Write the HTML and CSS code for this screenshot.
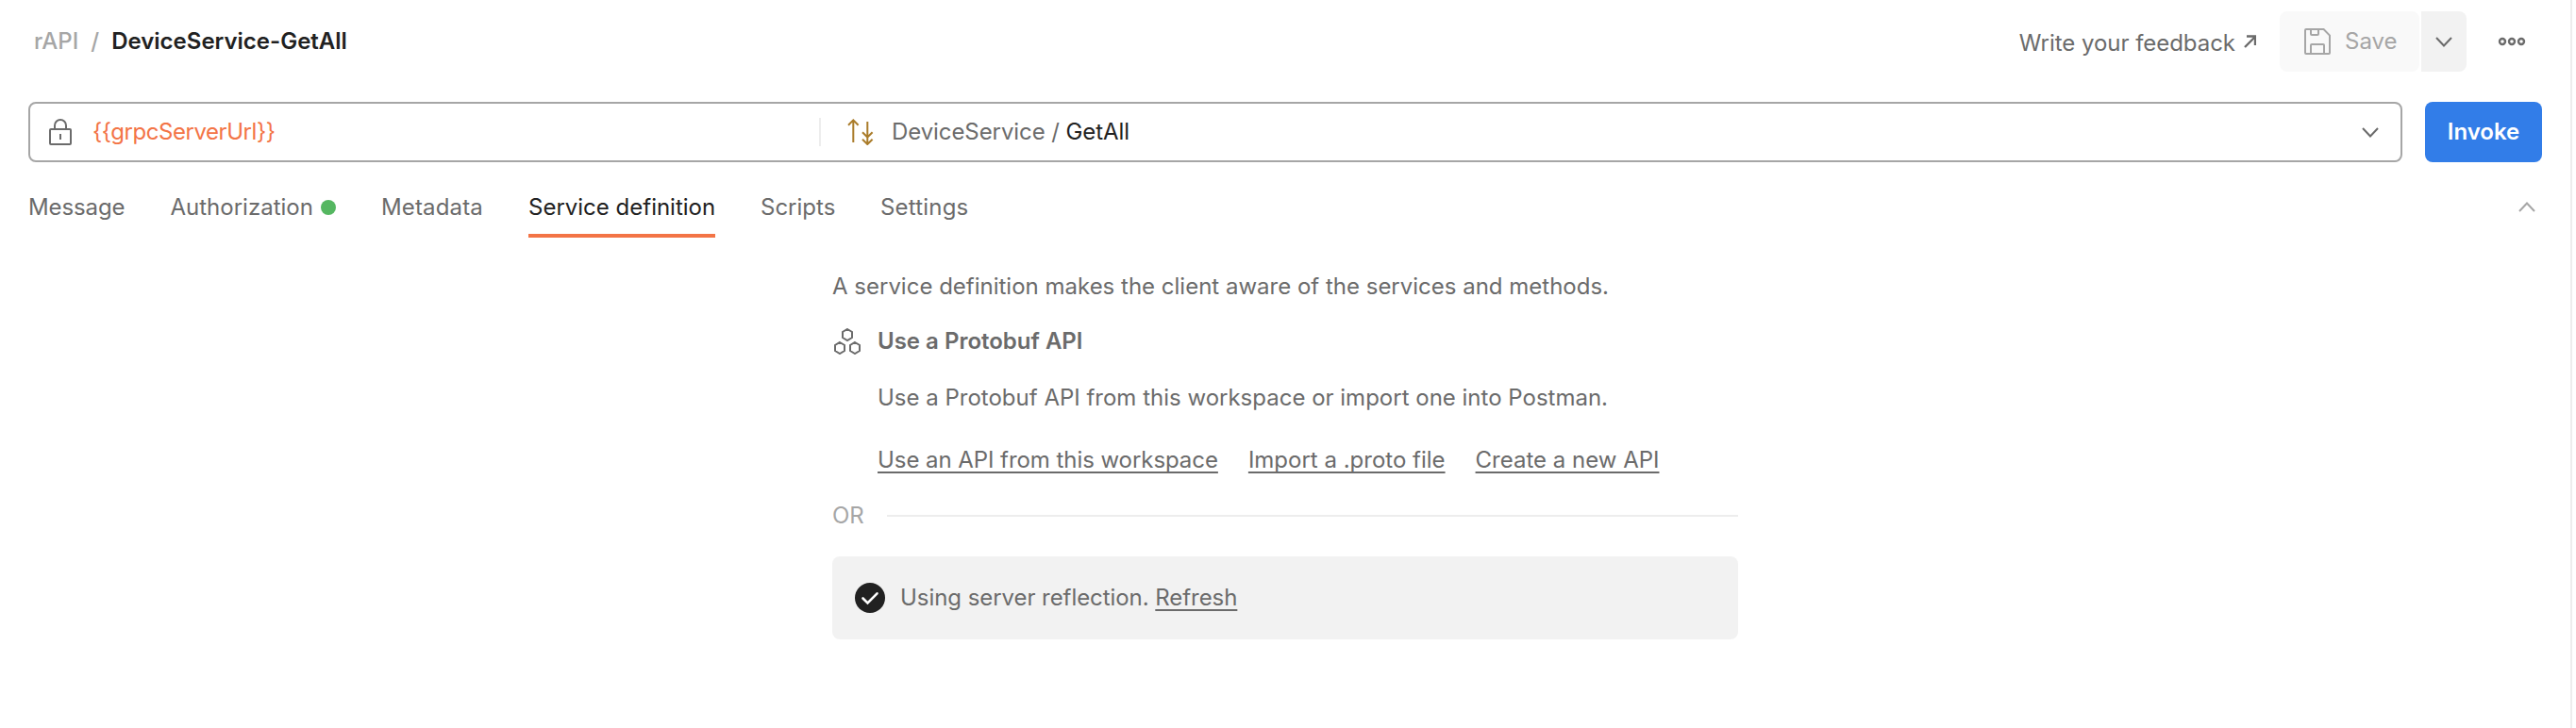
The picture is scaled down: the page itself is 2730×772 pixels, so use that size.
FILE: index.html
```html
<!DOCTYPE html>
<html lang="en"><head><meta charset="utf-8"><title>DeviceService-GetAll</title>
<link rel="stylesheet" href="styles.css"></head>
<body>
<main class="pane">
<header class="topbar">
  <nav class="crumbs"><span class="crumb">rAPI</span><span class="sep">/</span><h1 class="title">DeviceService-GetAll</h1></nav>
  <div class="actions">
    <a class="feedback"><span class="feedback-text">Write your feedback</span>
      <svg class="out" width="13" height="14" viewBox="0 0 13 14"><path d="M1 13 12 2M3 1.500h9v9.500"/></svg></a>
    <div class="split">
      <button class="save"><svg width="28" height="28" viewBox="0 0 28 28"><path d="M2 1h18.600L27 7.600V26a1 1 0 0 1-1 1H2a1 1 0 0 1-1-1V2a1 1 0 0 1 1-1zM7 1v5a1 1 0 0 0 1 1h6a1 1 0 0 0 1-1V1M7 27V18a1 1 0 0 1 1-1h12a1 1 0 0 1 1 1v9"/></svg>Save</button>
      <button class="caret"><svg width="18" height="11" viewBox="0 0 18 11"><path d="m1 1 8 8.500L17 1"/></svg></button>
    </div>
    <button class="more"><svg width="30" height="10" viewBox="0 0 30 10"><circle cx="5" cy="5" r="3"/><circle cx="15" cy="5" r="3"/><circle cx="25" cy="5" r="3"/></svg></button>
  </div>
</header>
<section class="request">
  <div class="field">
    <div class="url"><svg class="lock" width="24" height="28" viewBox="0 0 24 28"><path d="M2 11h20a1 1 0 0 1 1 1v14a1 1 0 0 1-1 1H2a1 1 0 0 1-1-1V12a1 1 0 0 1 1-1zM6 11V7a6 6 0 0 1 12 0v4M12 16v6"/></svg><span class="var">{{grpcServerUrl}}</span></div>
    <div class="method"><svg class="arrows" width="28" height="28" viewBox="0 0 28 28"><path d="M6.300 25V1.500M1 6.700l5.300-5.300 5.300 5.300M21.300 3v24M16 14.200l5.300 5.300 5.300-5.300M16 21.700l5.300 5.300 5.300-5.300"/></svg><span class="service">DeviceService / <b class="rpc">GetAll</b></span>
    <svg class="chev" width="18" height="11" viewBox="0 0 18 11"><path d="m1 1 8 8.500L17 1"/></svg></div>
  </div>
  <button class="invoke">Invoke</button>
</section>
<nav class="tabs">
  <a class="tab message">Message</a><a class="tab auth">Authorization<i class="dot"></i></a><a class="tab metadata">Metadata</a><a class="tab definition active">Service definition</a><a class="tab scripts">Scripts</a><a class="tab settings">Settings</a>
  <svg class="collapse" width="18" height="11" viewBox="0 0 18 11"><path d="m1 10 8-8.500L17 10"/></svg>
</nav>
<section class="content">
  <p class="line intro">A service definition makes the client aware of the services and methods.</p>
  <div class="option">
    <svg class="hex" width="30" height="28" viewBox="-1 0 30 28"><path d="m15 1 5 3v6l-5 3-5-3V4zM7 15l5 3v6l-5 3-5-3v-6zM23 15l5 3v6l-5 3-5-3v-6z"/></svg>
    <h2 class="heading">Use a Protobuf API</h2>
  </div>
  <p class="line desc">Use a Protobuf API from this workspace or import one into Postman.</p>
  <div class="links"><a class="link tight">Use an API from this workspace</a><a class="link">Import a .proto file</a><a class="link">Create a new API</a></div>
  <div class="or">OR</div>
  <div class="banner"><svg width="32" height="32" viewBox="0 0 32 32"><circle cx="16" cy="16" r="16"/><path d="m8.500 16.500 5 5L23.500 11.300"/></svg><span class="status">Using server reflection. <a class="link">Refresh</a></span></div>
</section>
</main>
</body></html>
```
FILE: styles.css
```css
*{box-sizing:border-box}
body,p,h1,h2{margin:0;font-weight:400}
body{background:#fff;color:#6b6b6b;font:24px/32px Inter,"Liberation Sans",sans-serif}
button{border:0;background:none;font:inherit;color:inherit;padding:0;display:flex;align-items:center;justify-content:center}
svg{display:block;flex:none;fill:none;stroke:#6b6b6b;stroke-width:2}
.pane{width:2726px;height:772px;border-right:2px solid #ededed;padding:12px 30px 0}
.topbar{display:flex;justify-content:space-between;height:64px}
.crumbs{display:flex;height:64px;align-items:center;padding-left:6px}
.crumb,.sep{color:#a6a6a6;font-weight:500}
.sep{margin:0 13px}
.title{font-size:24px;font-weight:600;color:#212121}
.actions{display:flex;align-items:center;margin-right:-16px}
.feedback{display:flex;align-items:center;gap:9px;margin-right:25px}
.feedback-text{padding-top:4px;letter-spacing:-.04px}
.out,.more svg{stroke-width:2.4}
.split{display:flex;gap:2px}
.save{width:148px;height:64px;background:#f9f9f9;border-radius:8px;color:#a6a6a6;gap:15px;justify-content:flex-start;padding-left:26px}
.save svg{stroke:#a6a6a6}
.caret{width:48px;height:64px;background:#f2f2f2;border-radius:0 8px 8px 0}
.more{width:96px}
.request{display:flex;gap:24px;margin-top:32px}
.field{display:flex;flex:1;height:64px;border:2px solid #a6a6a6;border-radius:8px;align-items:center}
.url{display:flex;align-items:center;width:838px;height:30px;border-right:2px solid #ededed;padding-left:20px}
.var{color:#f37446;margin-left:22px;letter-spacing:-.45px}
.method{display:flex;flex:1;align-items:center;padding:0 23px 0 28px}
.arrows{stroke:#aa7c2a}
.service{margin-left:19px;flex:1;letter-spacing:-.08px}
.rpc{font-weight:400;color:#212121}
.invoke{width:124px;height:64px;border-radius:8px;background:#327de8;color:#fff;font-weight:600}
.tabs{display:flex;gap:48px;height:80px;align-items:stretch}
.tab{display:flex;align-items:center;border-bottom:4px solid transparent;padding-top:20px;white-space:nowrap}
.message{width:102px;letter-spacing:-.1px}
.auth{width:176px;padding-left:.5px}
.metadata{width:108px;letter-spacing:.15px}
.definition{width:198px}
.scripts{width:79px}
.settings{letter-spacing:.2px}
.tab.active{color:#212121;border-color:#f37446}
.dot{width:16px;height:16px;border-radius:50%;background:#55b761;margin-left:auto}
.collapse{margin:42px 7px 0 auto;stroke:#a6a6a6}
.content{width:960px;margin:36px 0 0 852px}
.option{display:flex;align-items:center;gap:18px;margin-top:26px}
.heading{font-size:24px;font-weight:600}
.desc{margin:28px 0 0 48px}
.links{display:flex;gap:32px;margin:34px 0 0 48px}
.link{text-decoration:underline 2px;text-underline-offset:4px;text-decoration-skip-ink:none}
.tight,.status{letter-spacing:-.06px}
.or{display:flex;align-items:center;gap:24px;color:#a6a6a6;margin-top:27px}
.or::after{content:"";flex:1;height:2px;background:#ededed}
.banner{display:flex;align-items:center;gap:16px;height:88px;margin-top:27px;border-radius:8px;background:#f2f2f2;padding-left:24px}
.banner circle{fill:#212121;stroke:none}
.banner path{stroke:#fff;stroke-width:2.600;stroke-linecap:round}
```
